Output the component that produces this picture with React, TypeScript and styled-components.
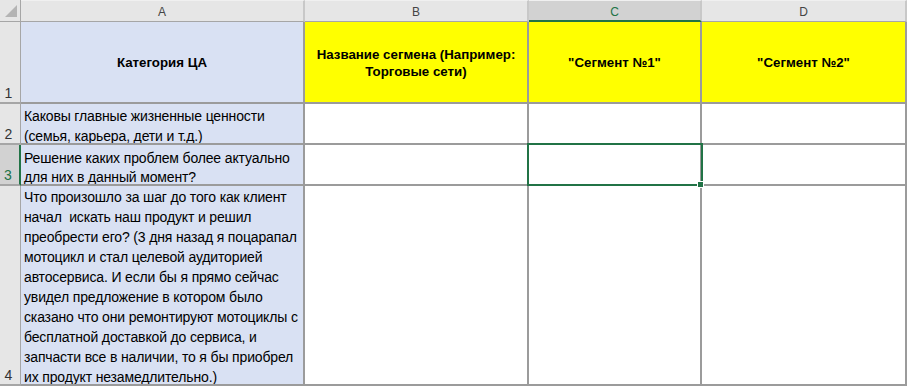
import styled, { createGlobalStyle, css } from 'styled-components'

const GlobalStyle = createGlobalStyle`
  html, body {
    margin: 0;
    padding: 0;
    background: #ffffff;
  }
  body {
    font-family: 'Liberation Sans', Arial, sans-serif;
  }
`

const GRID = '#9b9b9b'
const GREEN = '#217346'

const Sheet = styled.div`
  display: grid;
  grid-template-columns: 21px 284px 224px 173px 205px;
  grid-template-rows: 22px 82px 41px 41px 200px;
  width: 907px;
  height: 386px;
  overflow: hidden;
  background: #ffffff;
`

const Corner = styled.div`
  position: relative;
  background: #e6e6e6;
  border-right: 1px solid #a6a6a6;
  border-bottom: 1px solid #a6a6a6;
  box-sizing: border-box;

  &::after {
    content: '';
    position: absolute;
    right: 3px;
    bottom: 4px;
    width: 0;
    height: 0;
    border-left: 12px solid transparent;
    border-bottom: 12px solid #b4b4b4;
  }
`

const ColHeader = styled.div<{ $selected?: boolean }>`
  display: flex;
  align-items: center;
  justify-content: center;
  box-sizing: border-box;
  background: ${(p) => (p.$selected ? '#d2d2d2' : '#e6e6e6')};
  color: ${(p) => (p.$selected ? GREEN : '#444444')};
  border-right: 2px solid #c8c8c8;
  border-bottom: ${(p) => (p.$selected ? `2px solid ${GREEN}` : '1px solid #a6a6a6')};
  border-top: 1px solid #f0f0f0;
  font-size: 12px;
  padding-top: ${(p) => (p.$selected ? '2px' : '1px')};
`

const RowHeader = styled.div<{ $selected?: boolean }>`
  display: flex;
  align-items: flex-end;
  justify-content: center;
  box-sizing: border-box;
  padding: 0 3px 1px 0;
  background: ${(p) => (p.$selected ? '#d2d2d2' : '#e6e6e6')};
  color: ${(p) => (p.$selected ? GREEN : '#333333')};
  border-right: ${(p) => (p.$selected ? `2px solid ${GREEN}` : '1px solid #a6a6a6')};
  border-bottom: 2px solid #a6a6a6;
  font-size: 14px;
`

type Tone = 'blue' | 'yellow' | 'white'

const tones: Record<Tone, string> = {
  blue: '#d9e1f3',
  yellow: '#ffff00',
  white: '#ffffff',
}

const Cell = styled.div<{ $tone: Tone; $head?: boolean; $lh?: number }>`
  position: relative;
  box-sizing: border-box;
  display: flex;
  background: ${(p) => tones[p.$tone]};
  border-right: 2px solid ${GRID};
  border-bottom: 2px solid ${GRID};
  overflow: hidden;
  color: #000000;
  ${(p) =>
    p.$head
      ? css`
          align-items: center;
          justify-content: center;
          text-align: center;
          font-weight: bold;
          font-size: 13.3px;
          line-height: 17px;
          padding-top: 1px;
        `
      : css`
          align-items: flex-end;
          justify-content: flex-start;
          font-size: 14px;
          letter-spacing: -0.15px;
          line-height: ${p.$lh ?? 20}px;
          padding: 0 0 0 3px;
        `}
`

const Lines = styled.div<{ $drop?: number }>`
  white-space: pre;
  margin-bottom: ${(p) => -(p.$drop ?? 0)}px;
`

const Selection = styled.div`
  position: absolute;
  left: -2px;
  top: -2px;
  width: 176px;
  height: 43px;
  box-sizing: border-box;
  border: 2px solid ${GREEN};
  pointer-events: none;
`

const FillHandle = styled.div`
  position: absolute;
  left: 168px;
  top: 36px;
  width: 7px;
  height: 7px;
  box-sizing: border-box;
  background: ${GREEN};
  border: 1px solid #ffffff;
`

const row4 = [
  'Что произошло за шаг до того как клиент',
  'начал  искать наш продукт и решил',
  'преобрести его? (3 дня назад я поцарапал',
  'мотоцикл и стал целевой аудиторией',
  'автосервиса. И если бы я прямо сейчас',
  'увидел предложение в котором было',
  'сказано что они ремонтируют мотоциклы с',
  'бесплатной доставкой до сервиса, и',
  'запчасти все в наличии, то я бы приобрел',
  'их продукт незамедлительно.)',
]

export default function App() {
  return (
    <>
      <GlobalStyle />
      <Sheet>
        <Corner />
        <ColHeader>A</ColHeader>
        <ColHeader>B</ColHeader>
        <ColHeader $selected>C</ColHeader>
        <ColHeader>D</ColHeader>

        <RowHeader>1</RowHeader>
        <Cell $tone="blue" $head>
          <Lines>Категория ЦА</Lines>
        </Cell>
        <Cell $tone="yellow" $head>
          <Lines>{'Название сегмена (Например:\nТорговые сети)'}</Lines>
        </Cell>
        <Cell $tone="yellow" $head>
          <Lines>"Сегмент №1"</Lines>
        </Cell>
        <Cell $tone="yellow" $head>
          <Lines>"Сегмент №2"</Lines>
        </Cell>

        <RowHeader>2</RowHeader>
        <Cell $tone="blue">
          <Lines $drop={3}>{'Каковы главные жизненные ценности\n(семья, карьера, дети и т.д.)'}</Lines>
        </Cell>
        <Cell $tone="white" />
        <Cell $tone="white" />
        <Cell $tone="white" />

        <RowHeader $selected>3</RowHeader>
        <Cell $tone="blue" $lh={19}>
          <Lines $drop={3}>{'Решение каких проблем более актуально\nдля них в данный момент?'}</Lines>
        </Cell>
        <Cell $tone="white" />
        <Cell $tone="white" style={{ overflow: 'visible', zIndex: 1 }}>
          <Selection />
          <FillHandle />
        </Cell>
        <Cell $tone="white" />

        <RowHeader>4</RowHeader>
        <Cell $tone="blue">
          <Lines $drop={3}>{row4.join('\n')}</Lines>
        </Cell>
        <Cell $tone="white" />
        <Cell $tone="white" />
        <Cell $tone="white" />
      </Sheet>
    </>
  )
}
